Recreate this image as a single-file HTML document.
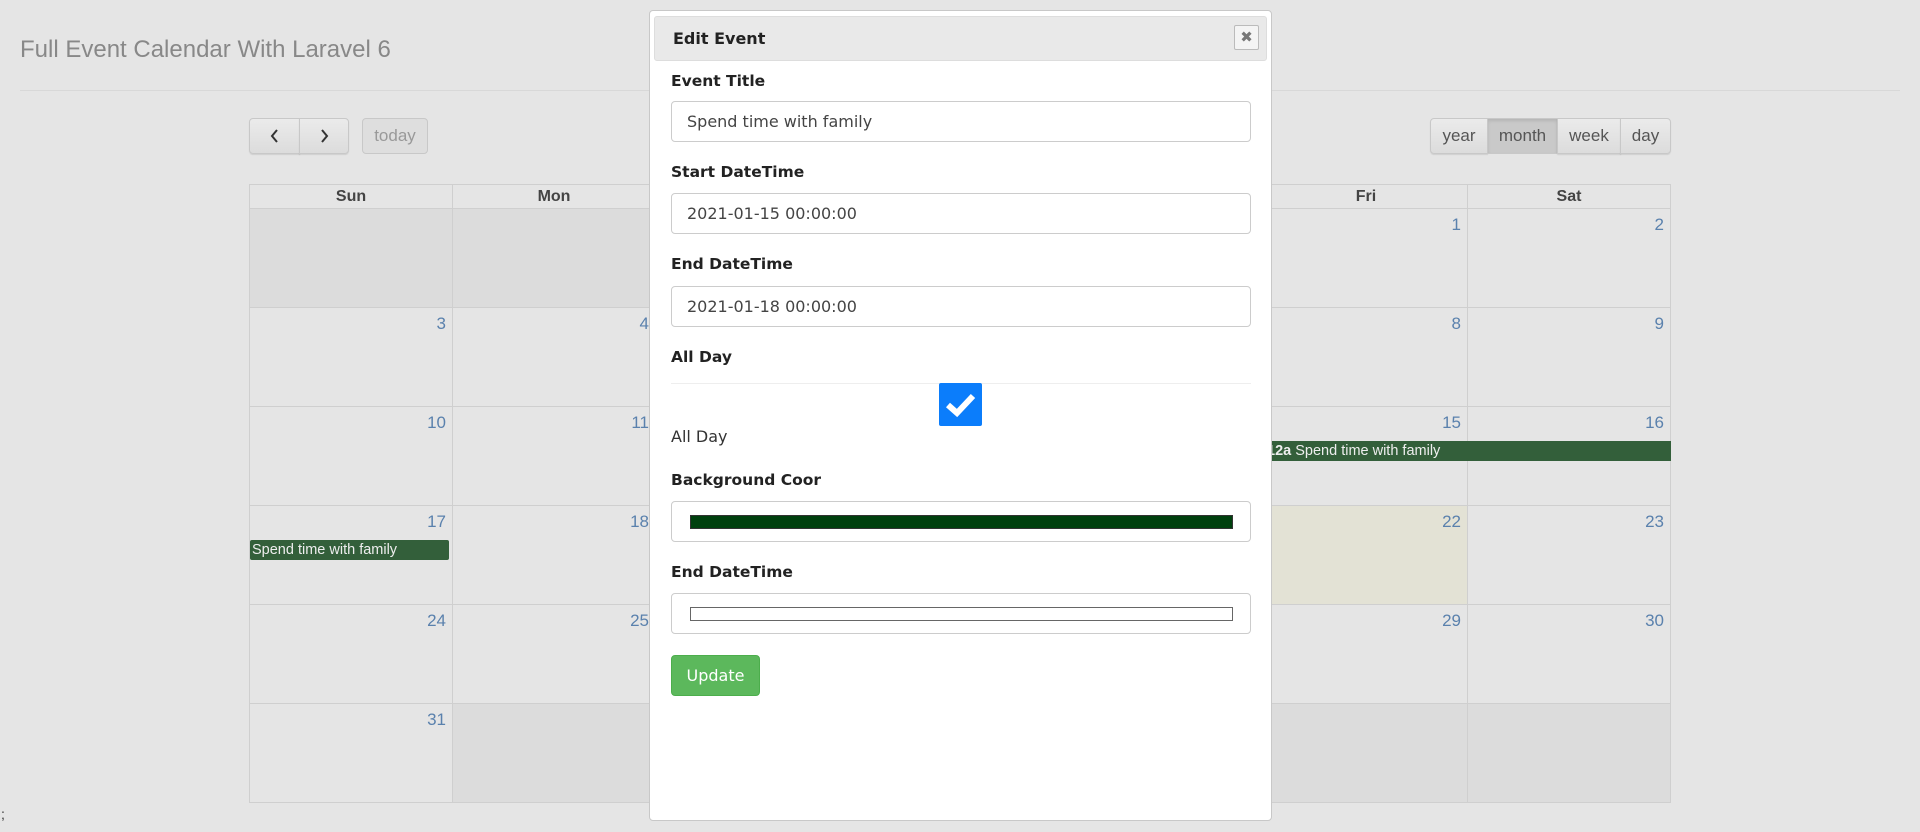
<!DOCTYPE html>
<html><head><meta charset="utf-8"><style>
*{box-sizing:border-box;margin:0;padding:0}
body{width:1920px;height:832px;overflow:hidden;background:#e5e5e5;font-family:"Liberation Sans",Arial,sans-serif;position:relative;color:#333}
.abs{position:absolute}
h1{position:absolute;left:20px;top:36px;font-size:24px;font-weight:normal;color:#888}
.hr{position:absolute;left:20px;right:20px;top:90px;border-top:1px solid #d8d8d8}
.btn{position:absolute;top:118px;height:36px;border:1px solid #c8c8c8;background:linear-gradient(#ebebeb,#dcdcdc);font-size:17px;color:#555;display:flex;align-items:center;justify-content:center;box-shadow:0 1px 1px rgba(0,0,0,.1)}
table{position:absolute;left:249px;top:184px;width:1422px;border-collapse:collapse;table-layout:fixed}
th{height:24px;border:1px solid #cfcfcf;font-size:16px;color:#444;font-weight:bold}
td{height:99px;border:1px solid #cfcfcf;vertical-align:top;text-align:right;padding:6px 6px;font-size:17px;color:#5a81ad}
td.o{background:#dcdcdc}
td.t{background:#e3e2d5}
.ev{position:absolute;background:#335f3a;color:#eee;font-size:14.5px;height:20px;line-height:20px;padding-left:2px;border-radius:2px}
.modal{position:absolute;left:649px;top:10px;width:623px;height:811px;background:#fff;border:1px solid #c8c8c8;border-radius:4px;font-family:"DejaVu Sans",Verdana,sans-serif}
.mh{position:absolute;left:4px;top:5px;right:4px;height:45px;background:#e9e9e9;border:1px solid #ddd;border-radius:3px;font-weight:bold;font-size:16px;padding:12px 0 0 18px;color:#222}
.x{position:absolute;right:7px;top:8px;width:25px;height:25px;border:1px solid #bbb;background:#f4f4f4;border-radius:2px;font-size:15px;color:#777;text-align:center;line-height:23px}
.lb{position:absolute;left:21px;font-weight:bold;font-size:15.5px;color:#222}
.in{position:absolute;left:21px;width:580px;height:41px;border:1px solid #ccc;border-radius:4px;font-size:16px;color:#444;padding:10px 0 0 15px}
</style></head><body>
<h1>Full Event Calendar With Laravel 6</h1>
<div class="hr"></div>
<div class="btn" style="left:249px;width:51px;border-radius:4px 0 0 4px">
<svg width="14" height="16" viewBox="0 0 14 16"><path d="M9 2L4 8l5 6" stroke="#333" stroke-width="2" fill="none"/></svg></div>
<div class="btn" style="left:299px;width:50px;border-radius:0 4px 4px 0">
<svg width="14" height="16" viewBox="0 0 14 16"><path d="M5 2l5 6-5 6" stroke="#333" stroke-width="2" fill="none"/></svg></div>
<div class="btn" style="left:362px;width:66px;border-radius:4px;color:#999;background:#dedede;box-shadow:none">today</div>
<div class="btn" style="left:1430px;width:58px;border-radius:4px 0 0 4px">year</div>
<div class="btn" style="left:1487px;width:71px;background:#c9c9c9;box-shadow:inset 0 2px 3px rgba(0,0,0,.1)">month</div>
<div class="btn" style="left:1557px;width:64px">week</div>
<div class="btn" style="left:1620px;width:51px;border-radius:0 4px 4px 0">day</div>
<table>
<tr><th>Sun</th><th>Mon</th><th>Tue</th><th>Wed</th><th>Thu</th><th>Fri</th><th>Sat</th></tr>
<tr><td class="o"></td><td class="o"></td><td class="o"></td><td class="o"></td><td class="o"></td><td>1</td><td>2</td></tr>
<tr><td>3</td><td>4</td><td>5</td><td>6</td><td>7</td><td>8</td><td>9</td></tr>
<tr><td>10</td><td>11</td><td>12</td><td>13</td><td>14</td><td>15</td><td>16</td></tr>
<tr><td>17</td><td>18</td><td>19</td><td>20</td><td>21</td><td class="t">22</td><td>23</td></tr>
<tr><td>24</td><td>25</td><td>26</td><td>27</td><td>28</td><td>29</td><td>30</td></tr>
<tr><td>31</td><td class="o"></td><td class="o"></td><td class="o"></td><td class="o"></td><td class="o"></td><td class="o"></td></tr>
</table>
<div class="ev" style="left:1265px;top:441px;width:406px;border-radius:2px 0 0 2px"><b>12a</b> Spend time with family</div>
<div class="ev" style="left:250px;top:540px;width:199px">Spend time with family</div>
<div class="abs" style="left:1px;top:806px;font-size:14px">;</div>
<div class="modal">
<div class="mh">Edit Event<div class="x">✖</div></div>
<div class="lb" style="top:61px">Event Title</div>
<div class="in" style="top:90px">Spend time with family</div>
<div class="lb" style="top:152px">Start DateTime</div>
<div class="in" style="top:182px">2021-01-15 00:00:00</div>
<div class="lb" style="top:244px">End DateTime</div>
<div class="in" style="top:275px">2021-01-18 00:00:00</div>
<div class="lb" style="top:337px">All Day</div>
<div class="abs" style="left:21px;top:372px;width:580px;border-top:1px solid #eee"></div>
<div class="abs" style="left:289px;top:372px;width:43px;height:43px;background:#0b7dfb;border-radius:2px">
<svg width="43" height="43" viewBox="0 0 43 43"><path d="M9 22l9 8 16-17" stroke="#fff" stroke-width="6" fill="none"/></svg></div>
<div class="abs" style="left:21px;top:416px;font-size:16px;color:#333">All Day</div>
<div class="lb" style="top:460px">Background Coor</div>
<div class="in" style="top:490px"><div class="abs" style="left:18px;top:13px;width:543px;height:14px;background:#00400e;border:1px solid #333"></div></div>
<div class="lb" style="top:552px">End DateTime</div>
<div class="in" style="top:582px"><div class="abs" style="left:18px;top:13px;width:543px;height:14px;background:#fff;border:1px solid #666"></div></div>
<div class="abs" style="left:21px;top:644px;width:89px;height:41px;background:#5cb85c;border:1px solid #4cae4c;border-radius:4px;color:#fff;font-size:16px;text-align:center;line-height:39px">Update</div>
</div>
</body></html>
